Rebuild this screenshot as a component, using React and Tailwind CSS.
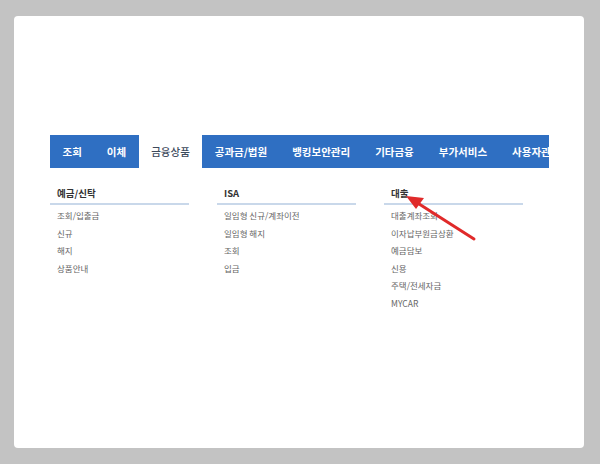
import React from "react";

const tabs = ["조회", "이체", "금융상품", "공과금/법원", "뱅킹보안관리", "기타금융", "부가서비스", "사용자관리"];

const cols = [
  { title: "예금/신탁", items: ["조회/입출금", "신규", "해지", "상품안내"] },
  { title: "ISA", items: ["일임형 신규/계좌이전", "일임형 해지", "조회", "입금"] },
  { title: "대출", items: ["대출계좌조회", "이자납부원금상환", "예금담보", "신용", "주택/전세자금", "MYCAR"] },
];

export default function App() {
  return (
    <div
      className="w-[600px] h-[464px] bg-[#c3c3c3] pt-[16px] pl-[14px] overflow-hidden"
      style={{ fontFamily: '"Noto Sans CJK KR", "Noto Sans", sans-serif' }}
    >
      <div className="relative w-[570px] h-[432px] bg-white rounded-[4px] pt-[119px] pl-[36px]">
        <div className="w-[499px] h-[33px] bg-[#2f6fc2] flex overflow-hidden">
          {tabs.map((t, i) => (
            <div
              key={t}
              className={
                "h-full shrink-0 flex items-center px-[12.5px] text-[10.5px] whitespace-nowrap " +
                (i === 2 ? "bg-white text-[#3d4a5c] font-medium" : "text-white font-bold")
              }
            >
              {t}
            </div>
          ))}
        </div>
        <div className="flex mt-[18px]">
          {cols.map((c) => (
            <div key={c.title} className="w-[167px] shrink-0">
              <div className="w-[139px] border-b-2 border-[#c9d8ea] pl-[7px] pb-[3px] text-[9.5px] font-bold text-[#333]">
                {c.title}
              </div>
              <div className="pl-[7px] pt-[2px] flex flex-col">
                {c.items.map((it) => (
                  <div key={it} className="h-[17.5px] leading-[17.5px] text-[8.5px] text-[#666] whitespace-nowrap">
                    {it}
                  </div>
                ))}
              </div>
            </div>
          ))}
        </div>
        <svg className="absolute left-[388px] top-[177px]" width="90" height="60" viewBox="0 0 90 60">
          <line x1="72" y1="46" x2="14" y2="9" stroke="#e02a2a" strokeWidth="3" strokeLinecap="round" />
          <polygon points="4,3 22,5 14,16" fill="#e02a2a" />
        </svg>
      </div>
    </div>
  );
}
